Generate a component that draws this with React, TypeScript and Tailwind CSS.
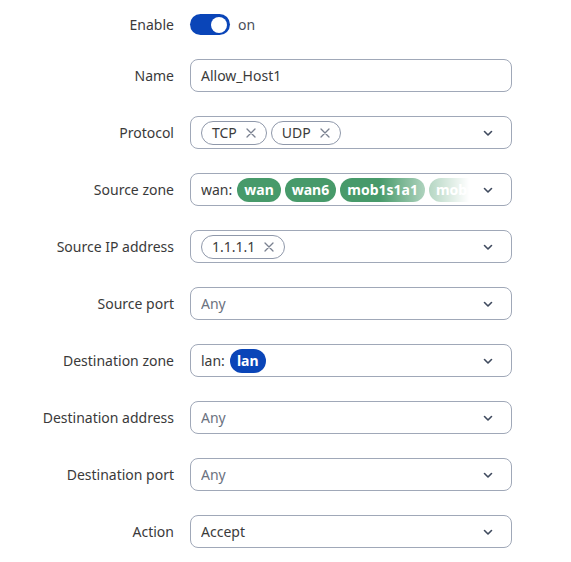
import React from "react";

const Chevron = () => (
  <svg width="12" height="12" viewBox="0 0 12 12" className="shrink-0 text-[#3f4a5e]">
    <path d="M2.5 4.5L6 8l3.5-3.5" fill="none" stroke="currentColor" strokeWidth="1.6" strokeLinecap="round" strokeLinejoin="round" />
  </svg>
);

const Chip = ({ label }: { label: string }) => (
  <span className="flex items-center gap-[9px] h-[24px] rounded-full border border-[#8f98aa] pl-[10px] pr-[10px] text-[14px] text-[#3b3b3b]">
    {label}
    <svg width="10" height="10" viewBox="0 0 10 10" className="text-[#7a8190]">
      <path d="M1 1l8 8M9 1L1 9" stroke="currentColor" strokeWidth="1.3" strokeLinecap="round" />
    </svg>
  </span>
);

const Zone = ({ label, color }: { label: string; color: string }) => (
  <span className={`flex items-center h-[24px] rounded-full px-[7px] text-[14px] font-bold text-white shrink-0 ${color}`}>
    {label}
  </span>
);

const Field = ({ children }: { children: React.ReactNode }) => (
  <div className="flex items-center w-[322px] h-[33px] rounded-[8px] border border-[#a0a8b8] pl-[10px] pr-[17px] gap-2 bg-white">
    <div className="flex-1 flex items-center gap-[4px] overflow-hidden min-w-0">{children}</div>
    <Chevron />
  </div>
);

const Row = ({ label, children, h = "h-[33px]" }: { label: string; children: React.ReactNode; h?: string }) => (
  <div className={`flex items-center ${h}`}>
    <div className="w-[174px] text-right text-[14px] text-[#3a3a3a]">{label}</div>
    <div className="ml-[16px]">{children}</div>
  </div>
);

export default function App() {
  return (
    <div className="w-[571px] h-[562px] bg-white pt-[14px]" style={{ fontFamily: '"Noto Sans", "Open Sans", sans-serif' }}>
      <div className="flex flex-col gap-[24px]">
        <Row label="Enable" h="h-[21px]">
          <div className="flex items-center gap-[8px]">
            <div className="w-[40px] h-[21px] rounded-full bg-[#0a45b8] flex items-center justify-end pr-[3px]">
              <div className="w-[16px] h-[16px] rounded-full bg-white" />
            </div>
            <span className="text-[14px] text-[#4a4f5a]">on</span>
          </div>
        </Row>
        <Row label="Name">
          <div className="flex items-center w-[322px] h-[33px] rounded-[8px] border border-[#a0a8b8] px-[10px] text-[14px] text-[#3b3b3b]">
            Allow_Host1
          </div>
        </Row>
        <Row label="Protocol">
          <Field>
            <Chip label="TCP" />
            <Chip label="UDP" />
          </Field>
        </Row>
        <Row label="Source zone">
          <Field>
            <div className="relative flex items-center gap-[4px] w-[268px] overflow-hidden">
              <span className="text-[14px] text-[#3b3b3b] mr-[1px] shrink-0">wan:</span>
              <Zone label="wan" color="bg-[#479a6a]" />
              <Zone label="wan6" color="bg-[#479a6a]" />
              <Zone label="mob1s1a1" color="bg-[#479a6a]" />
              <Zone label="mob1s1a2" color="bg-[#479a6a]" />
              <div className="absolute right-0 top-0 h-full w-[90px] bg-gradient-to-r from-white/0 via-white/55 to-white" />
            </div>
          </Field>
        </Row>
        <Row label="Source IP address">
          <Field>
            <Chip label="1.1.1.1" />
          </Field>
        </Row>
        <Row label="Source port">
          <Field>
            <span className="text-[14px] text-[#6b7280]">Any</span>
          </Field>
        </Row>
        <Row label="Destination zone">
          <Field>
            <span className="text-[14px] text-[#3b3b3b] mr-[1px]">lan:</span>
            <Zone label="lan" color="bg-[#0a45b8]" />
          </Field>
        </Row>
        <Row label="Destination address">
          <Field>
            <span className="text-[14px] text-[#6b7280]">Any</span>
          </Field>
        </Row>
        <Row label="Destination port">
          <Field>
            <span className="text-[14px] text-[#6b7280]">Any</span>
          </Field>
        </Row>
        <Row label="Action">
          <Field>
            <span className="text-[14px] text-[#3b3b3b]">Accept</span>
          </Field>
        </Row>
      </div>
    </div>
  );
}
